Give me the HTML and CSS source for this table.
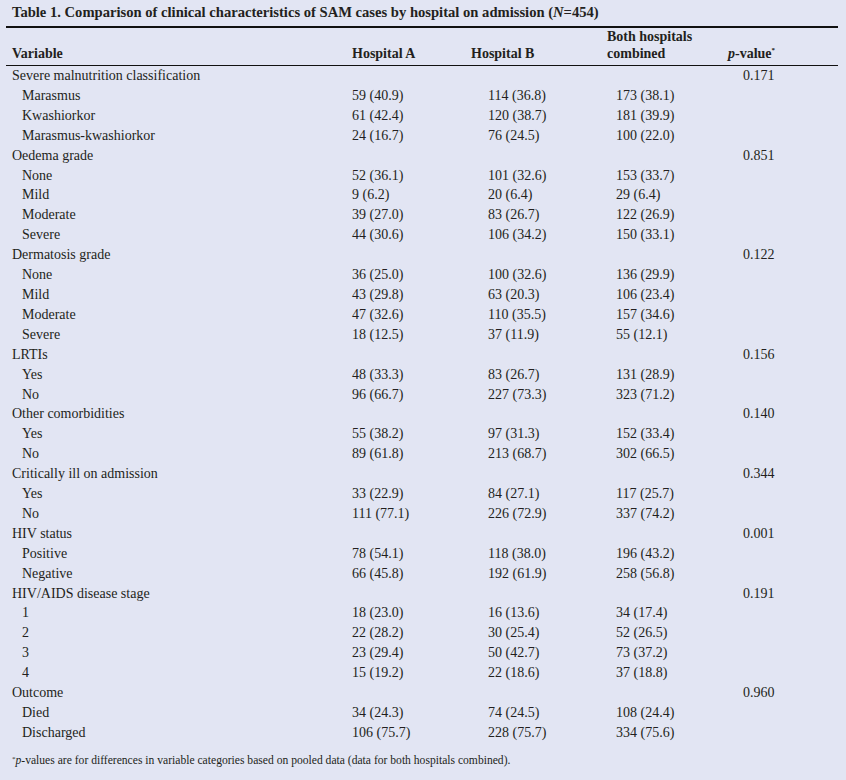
FILE: index.html
```html
<!DOCTYPE html>
<html>
<head>
<meta charset="utf-8">
<link rel="stylesheet" href="styles.css">
</head>
<body>
<div class="page">
  <div class="title">Table 1. Comparison of clinical characteristics of SAM cases by hospital on admission (<i>N</i>=454)</div>
  <table class="tbl">
    <colgroup>
      <col class="c1"><col class="c2"><col class="c3"><col class="c4"><col class="c5">
    </colgroup>
    <thead>
      <tr>
        <th class="h-var">Variable</th>
        <th class="h-a">Hospital A</th>
        <th class="h-b">Hospital B</th>
        <th class="h-both">Both hospitals<br>combined</th>
        <th class="h-p"><i>p</i>-value<sup>*</sup></th>
      </tr>
    </thead>
    <tbody>
      <tr class="grp"><td>Severe malnutrition classification</td><td></td><td></td><td></td><td>0.171</td></tr>
      <tr><td>Marasmus</td><td>59 (40.9)</td><td>114 (36.8)</td><td>173 (38.1)</td><td></td></tr>
      <tr><td>Kwashiorkor</td><td>61 (42.4)</td><td>120 (38.7)</td><td>181 (39.9)</td><td></td></tr>
      <tr><td>Marasmus-kwashiorkor</td><td>24 (16.7)</td><td>76 (24.5)</td><td>100 (22.0)</td><td></td></tr>
      <tr class="grp"><td>Oedema grade</td><td></td><td></td><td></td><td>0.851</td></tr>
      <tr><td>None</td><td>52 (36.1)</td><td>101 (32.6)</td><td>153 (33.7)</td><td></td></tr>
      <tr><td>Mild</td><td>9 (6.2)</td><td>20 (6.4)</td><td>29 (6.4)</td><td></td></tr>
      <tr><td>Moderate</td><td>39 (27.0)</td><td>83 (26.7)</td><td>122 (26.9)</td><td></td></tr>
      <tr><td>Severe</td><td>44 (30.6)</td><td>106 (34.2)</td><td>150 (33.1)</td><td></td></tr>
      <tr class="grp"><td>Dermatosis grade</td><td></td><td></td><td></td><td>0.122</td></tr>
      <tr><td>None</td><td>36 (25.0)</td><td>100 (32.6)</td><td>136 (29.9)</td><td></td></tr>
      <tr><td>Mild</td><td>43 (29.8)</td><td>63 (20.3)</td><td>106 (23.4)</td><td></td></tr>
      <tr><td>Moderate</td><td>47 (32.6)</td><td>110 (35.5)</td><td>157 (34.6)</td><td></td></tr>
      <tr><td>Severe</td><td>18 (12.5)</td><td>37 (11.9)</td><td>55 (12.1)</td><td></td></tr>
      <tr class="grp"><td>LRTIs</td><td></td><td></td><td></td><td>0.156</td></tr>
      <tr><td>Yes</td><td>48 (33.3)</td><td>83 (26.7)</td><td>131 (28.9)</td><td></td></tr>
      <tr><td>No</td><td>96 (66.7)</td><td>227 (73.3)</td><td>323 (71.2)</td><td></td></tr>
      <tr class="grp"><td>Other comorbidities</td><td></td><td></td><td></td><td>0.140</td></tr>
      <tr><td>Yes</td><td>55 (38.2)</td><td>97 (31.3)</td><td>152 (33.4)</td><td></td></tr>
      <tr><td>No</td><td>89 (61.8)</td><td>213 (68.7)</td><td>302 (66.5)</td><td></td></tr>
      <tr class="grp"><td>Critically ill on admission</td><td></td><td></td><td></td><td>0.344</td></tr>
      <tr><td>Yes</td><td>33 (22.9)</td><td>84 (27.1)</td><td>117 (25.7)</td><td></td></tr>
      <tr><td>No</td><td>111 (77.1)</td><td>226 (72.9)</td><td>337 (74.2)</td><td></td></tr>
      <tr class="grp"><td>HIV status</td><td></td><td></td><td></td><td>0.001</td></tr>
      <tr><td>Positive</td><td>78 (54.1)</td><td>118 (38.0)</td><td>196 (43.2)</td><td></td></tr>
      <tr><td>Negative</td><td>66 (45.8)</td><td>192 (61.9)</td><td>258 (56.8)</td><td></td></tr>
      <tr class="grp"><td>HIV/AIDS disease stage</td><td></td><td></td><td></td><td>0.191</td></tr>
      <tr><td>1</td><td>18 (23.0)</td><td>16 (13.6)</td><td>34 (17.4)</td><td></td></tr>
      <tr><td>2</td><td>22 (28.2)</td><td>30 (25.4)</td><td>52 (26.5)</td><td></td></tr>
      <tr><td>3</td><td>23 (29.4)</td><td>50 (42.7)</td><td>73 (37.2)</td><td></td></tr>
      <tr><td>4</td><td>15 (19.2)</td><td>22 (18.6)</td><td>37 (18.8)</td><td></td></tr>
      <tr class="grp"><td>Outcome</td><td></td><td></td><td></td><td>0.960</td></tr>
      <tr><td>Died</td><td>34 (24.3)</td><td>74 (24.5)</td><td>108 (24.4)</td><td></td></tr>
      <tr><td>Discharged</td><td>106 (75.7)</td><td>228 (75.7)</td><td>334 (75.6)</td><td></td></tr>
    </tbody>
  </table>
  <div class="note"><sup>*</sup><i>p</i>-values are for differences in variable categories based on pooled data (data for both hospitals combined).</div>
</div>
</body>
</html>
```
FILE: styles.css
```css
html, body {
  margin: 0;
  padding: 0;
  background: #e2e5f3;
}
.page {
  width: 846px;
  height: 780px;
  padding: 0 8px 0 6px;
  box-sizing: border-box;
  font-family: "Liberation Serif", "Times New Roman", serif;
  color: #231f20;
}
.title {
  font-weight: bold;
  font-size: 14.6px;
  line-height: 17px;
  padding: 4px 0 0 6px;
  height: 22px;
  border-bottom: 2px solid #111;
}
.tbl {
  width: 832px;
  border-collapse: collapse;
  table-layout: fixed;
  font-size: 14px;
}
.c1 { width: 346px; }
.c2 { width: 119px; }
.c3 { width: 136px; }
.c4 { width: 121px; }
.c5 { width: 110px; }
.tbl th {
  font-weight: bold;
  text-align: left;
  vertical-align: bottom;
  line-height: 17px;
  padding: 0 0 3px 0;
  border-bottom: 1px solid #111;
  height: 32px;
}
.tbl th.h-var { padding-left: 6px; }
.tbl th sup, .note sup {
  font-size: 7px;
  vertical-align: top;
  line-height: 1;
  position: relative;
  top: 2px;
}
.tbl td {
  padding: 0;
  height: 19.9px;
  line-height: 19.9px;
  white-space: nowrap;
}
.tbl td:nth-child(1) { padding-left: 16px; }
.tbl tr.grp td:nth-child(1) { padding-left: 6px; }
.tbl td:nth-child(3) { padding-left: 17px; }
.tbl td:nth-child(4) { padding-left: 9px; }
.tbl td:nth-child(5) { padding-left: 15px; }
.note {
  font-size: 11.6px;
  padding: 11px 0 0 6px;
  line-height: 14px;
}
```
